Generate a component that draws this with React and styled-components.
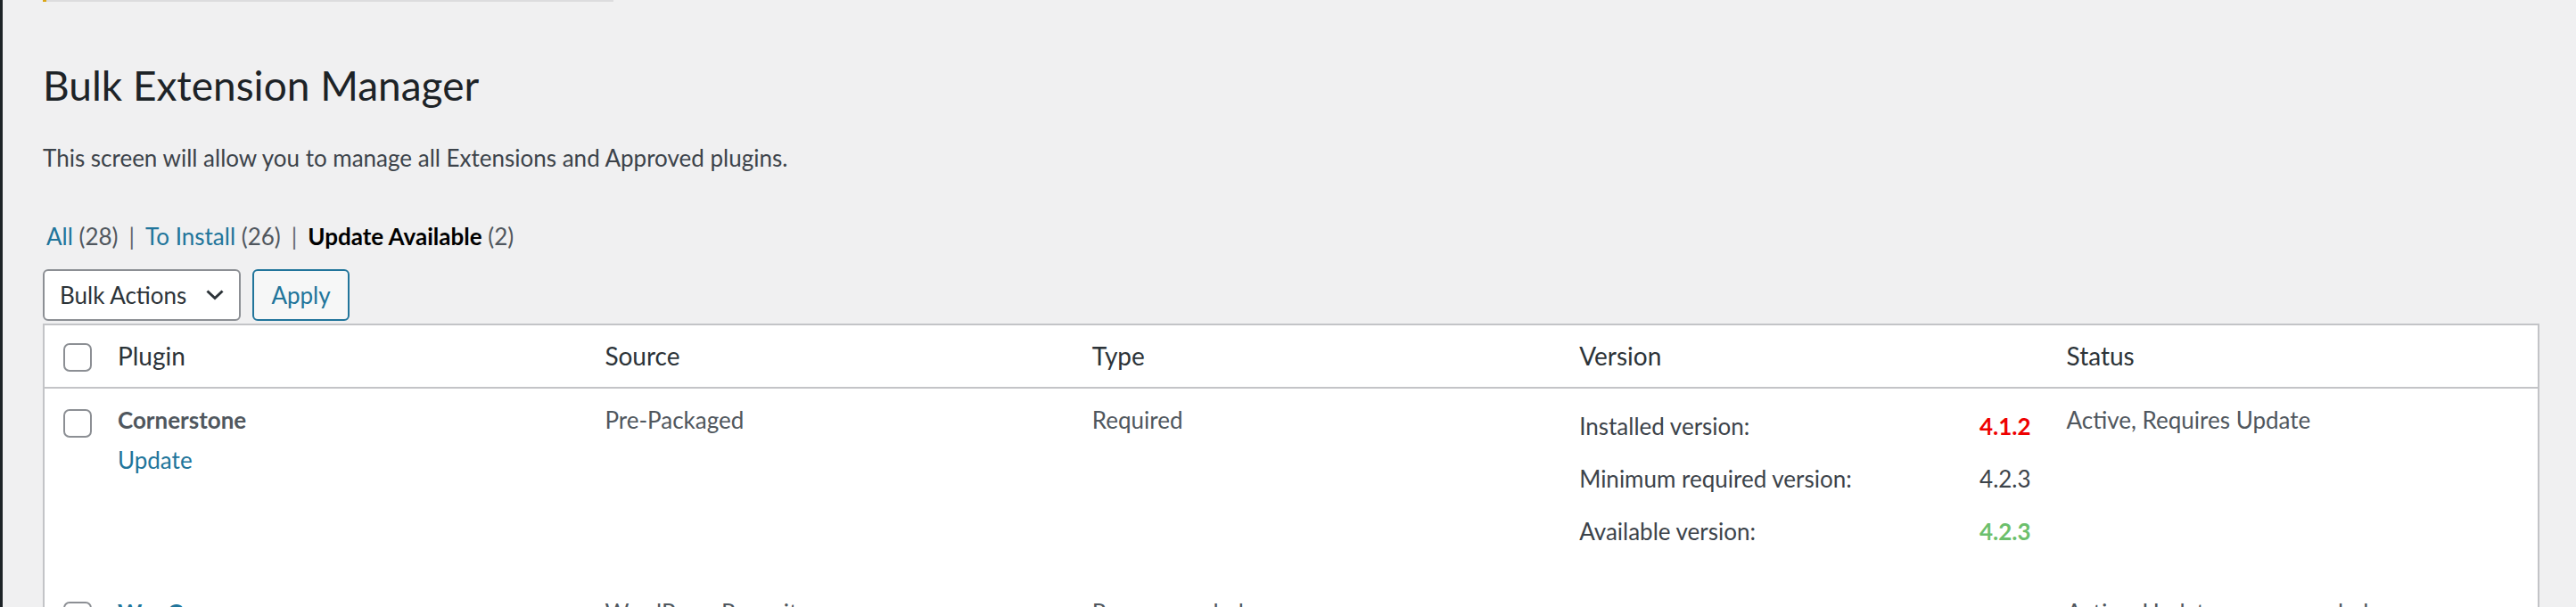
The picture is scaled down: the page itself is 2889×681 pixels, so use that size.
import React from "react";
import styled, { createGlobalStyle } from "styled-components";

const GlobalStyle = createGlobalStyle`
  html, body {
    margin: 0;
    padding: 0;
    background: #f0f0f1;
  }
  body {
    font-family: Lato, "Open Sans", "Liberation Sans", sans-serif;
    color: #3c434a;
    overflow: hidden;
  }
`;

const plugins = [
  {
    name: "Cornerstone",
    action: "Update",
    source: "Pre-Packaged",
    type: "Required",
    installed: "4.1.2",
    minimum: "4.2.3",
    available: "4.2.3",
    status: "Active, Requires Update",
    outdated: true,
  },
  {
    name: "WooCommerce",
    linked: true,
    source: "WordPress Repository",
    type: "Recommended",
    installed: "8.9.3",
    minimum: "8.9.3",
    available: "9.0.2",
    status: "Active, Update recommended",
  },
];

const filters = [
  { label: "All", count: 28 },
  { label: "To Install", count: 26 },
  { label: "Update Available", count: 2, current: true },
];

export default function App() {
  return (
    <Page>
      <GlobalStyle />
      <AdminMenu />
      <Main>
        <Notice />
        <Title>Bulk Extension Manager</Title>
        <Intro>This screen will allow you to manage all Extensions and Approved plugins.</Intro>

        <Filters>
          {filters.map((f, i) => (
            <li key={f.label}>
              {f.current ? <Current>{f.label}</Current> : <FilterLink href="#">{f.label}</FilterLink>}
              <Count> ({f.count})</Count>
              {i < filters.length - 1 && <Divider>|</Divider>}
            </li>
          ))}
        </Filters>

        <Toolbar>
          <BulkSelect>
            Bulk Actions
            <svg width="22" height="14" viewBox="0 0 22 14">
              <path d="M2.5 2.5 L11 10.5 L19.5 2.5" fill="none" stroke="#2c3338" strokeWidth="3" />
            </svg>
          </BulkSelect>
          <ApplyButton>Apply</ApplyButton>
        </Toolbar>

        <Table>
          <HeadRow>
            <CheckCell $head>
              <Checkbox />
            </CheckCell>
            <HeadCell>Plugin</HeadCell>
            <HeadCell>Source</HeadCell>
            <HeadCell>Type</HeadCell>
            <HeadCell>Version</HeadCell>
            <HeadCell>Status</HeadCell>
          </HeadRow>

          {plugins.map((p) => (
            <Row key={p.name}>
              <CheckCell>
                <Checkbox />
              </CheckCell>
              <Cell>
                <PluginName $linked={p.linked}>{p.name}</PluginName>
                {p.action && <RowAction href="#">{p.action}</RowAction>}
              </Cell>
              <Cell>{p.source}</Cell>
              <Cell>{p.type}</Cell>
              <Cell>
                <VersionList>
                  <span>Installed version:</span>
                  <VersionValue $tone={p.outdated ? "bad" : "plain"}>{p.installed}</VersionValue>
                  <span>Minimum required version:</span>
                  <VersionValue>{p.minimum}</VersionValue>
                  <span>Available version:</span>
                  <VersionValue $tone={p.outdated ? "good" : "plain"}>{p.available}</VersionValue>
                </VersionList>
              </Cell>
              <Cell>{p.status}</Cell>
            </Row>
          ))}
        </Table>
      </Main>
    </Page>
  );
}

const Page = styled.div`
  display: flex;
  min-height: 100vh;
`;

const AdminMenu = styled.div`
  width: 3px;
  flex-shrink: 0;
  background: #1d2327;
`;

const Main = styled.div`
  flex: 1;
  padding: 0 41px 0 45px;
`;

const Notice = styled.div`
  width: 636px;
  height: 2px;
  background: #dcdcde;
  border-left: 4px solid #dba617;
`;

const Title = styled.h1`
  margin: 64px 0 0;
  font-size: 46px;
  line-height: 60px;
  font-weight: 400;
  color: #1d2327;
`;

const Intro = styled.p`
  margin: 32px 0 0;
  font-size: 26px;
  line-height: 39px;
  color: #3c434a;
`;

const Filters = styled.ul`
  display: flex;
  margin: 49px 0 0;
  padding: 0 0 0 4px;
  list-style: none;
  font-size: 26px;
  line-height: 39px;
  color: #50575e;
  white-space: pre;
`;

const FilterLink = styled.a`
  color: #21759b;
  text-decoration: none;
`;

const Current = styled.span`
  color: #000;
  font-weight: 700;
`;

const Count = styled.span`
  color: #50575e;
`;

const Divider = styled.span`
  color: #646970;
  padding: 0 12px;
`;

const Toolbar = styled.div`
  display: flex;
  gap: 13px;
  margin-top: 17px;
  height: 58px;
`;

const BulkSelect = styled.div`
  box-sizing: border-box;
  width: 222px;
  height: 58px;
  display: flex;
  align-items: center;
  justify-content: space-between;
  padding: 0 16px 0 17px;
  border: 2px solid #8c8f94;
  border-radius: 6px;
  background: #fff;
  font-size: 26px;
  color: #2c3338;
`;

const ApplyButton = styled.button`
  box-sizing: border-box;
  width: 109px;
  height: 58px;
  padding: 0;
  border: 2px solid #21759b;
  border-radius: 6px;
  background: #f6f7f7;
  font-family: inherit;
  font-size: 26px;
  color: #21759b;
`;

const Table = styled.div`
  margin-top: 3px;
  background: #fff;
  border: 2px solid #c3c4c7;
  border-bottom: 0;
  box-shadow: 0 1px 1px rgba(0, 0, 0, 0.04);
`;

const grid = `
  display: grid;
  grid-template-columns: 64px repeat(5, 1fr);
`;

const HeadRow = styled.div`
  ${grid}
  border-bottom: 2px solid #c3c4c7;
`;

const Row = styled.div`
  ${grid}
`;

const HeadCell = styled.div`
  padding: 15px 18px 15px;
  font-size: 28px;
  line-height: 39px;
  color: #2c3338;
`;

const Cell = styled.div`
  padding: 16px 18px 16px;
  font-size: 26px;
  line-height: 39px;
  color: #50575e;
`;

const CheckCell = styled.div`
  padding: ${(p) => (p.$head ? "20px" : "23px")} 0 0 21px;
`;

const Checkbox = styled.span`
  display: block;
  box-sizing: border-box;
  width: 32px;
  height: 32px;
  border: 2px solid #8c8f94;
  border-radius: 7px;
  background: #fff;
`;

const PluginName = styled.strong`
  display: block;
  font-weight: 700;
  color: ${(p) => (p.$linked ? "#21759b" : "#50575e")};
`;

const RowAction = styled.a`
  display: block;
  padding-top: 6px;
  color: #21759b;
  text-decoration: none;
`;

const VersionList = styled.div`
  display: grid;
  grid-template-columns: 1fr auto;
  row-gap: 20px;
  margin: 7px 4px 20px 0;
  color: #3c434a;
`;

const toneColor = { bad: "#e00", good: "#6cbf6c", plain: "#3c434a" };

const VersionValue = styled.span`
  text-align: right;
  color: ${(p) => toneColor[p.$tone || "plain"]};
  font-weight: ${(p) => (p.$tone && p.$tone !== "plain" ? 700 : 400)};
`;
